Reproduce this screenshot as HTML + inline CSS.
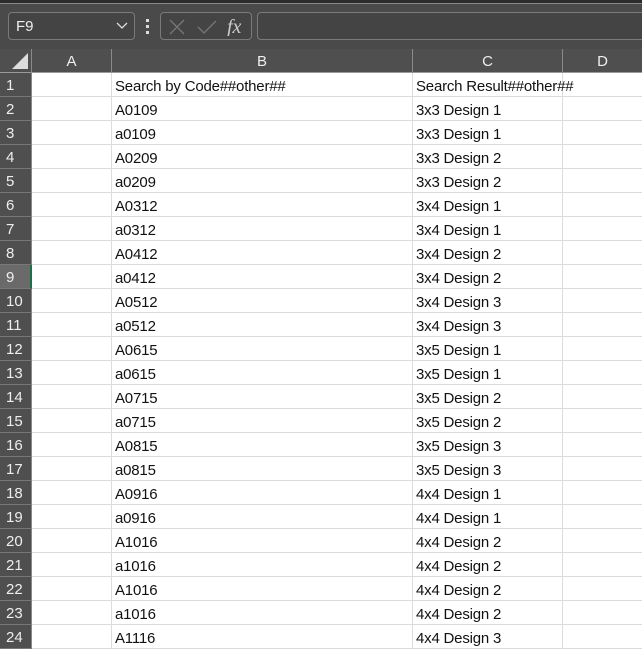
<!DOCTYPE html><html><head><style>
body{margin:0;width:642px;height:647px;overflow:hidden;background:#fff;font-family:"Liberation Sans",sans-serif;position:relative}
.top{position:absolute;left:0;top:0;width:642px;height:49px;background:#4a4a4a}
.strip{position:absolute;left:0;top:0;width:642px;height:3px;background:#2b2b2b;border-bottom:1px solid #888}
.box{position:absolute;top:12px;height:28px;border:1px solid #7a7a7a;border-radius:4px;background:#444;box-sizing:border-box}
.hdr{position:absolute;top:49px;height:24px;background:#4f4f4f;color:#eee;font-size:15px;text-align:center;line-height:26px;box-sizing:border-box;border-right:1px solid #8a8a8a;border-bottom:1px solid #9a9a9a}
.rh{position:absolute;left:0;width:32px;height:24px;background:#4f4f4f;color:#eee;font-size:15px;line-height:26px;padding-left:6px;box-sizing:border-box;border-bottom:1px solid #777;border-right:1px solid #888}
.c{position:absolute;height:24px;box-sizing:border-box;border-right:1px solid #dcdcdc;border-bottom:1px solid #dcdcdc;font-size:15px;line-height:27px;padding-left:3px;color:#111;white-space:nowrap;letter-spacing:-0.2px}
</style></head><body>
<div class="top"></div><div class="strip"></div>
<div class="box" style="left:8px;width:127px"><span style="position:absolute;left:7px;top:5px;color:#eee;font-size:15px">F9</span><svg style="position:absolute;right:6px;top:9px" width="12" height="8"><path d="M1 1L6 6L11 1" stroke="#ddd" fill="none" stroke-width="1.3"/></svg></div>
<div style="position:absolute;left:146px;top:19px;width:3px;height:3px;background:#ddd"></div><div style="position:absolute;left:146px;top:25px;width:3px;height:3px;background:#ddd"></div><div style="position:absolute;left:146px;top:31px;width:3px;height:3px;background:#ddd"></div>
<div class="box" style="left:160px;width:92px"><svg style="position:absolute;left:8px;top:5px" width="82" height="18"><path d="M1 2L15 16M15 2L1 16" stroke="#777" stroke-width="1.3"/><path d="M29 9L35 15L47 3" stroke="#777" fill="none" stroke-width="1.3"/><text x="58" y="15" fill="#ccc" font-family="Liberation Serif" font-style="italic" font-size="20">fx</text></svg></div>
<div class="box" style="left:257px;width:400px"></div>
<div class="hdr" style="left:0;width:32px;background:#4f4f4f"><svg style="position:absolute;left:12px;top:4px" width="16" height="16"><path d="M16 0L16 16L0 16Z" fill="#ddd"/></svg></div>
<div class="hdr" style="left:32px;width:80px">A</div>
<div class="hdr" style="left:112px;width:301px">B</div>
<div class="hdr" style="left:413px;width:150px">C</div>
<div class="hdr" style="left:563px;width:80px">D</div>
<div id="g"></div>
<script>
var b=["Search by Code##other##","A0109","a0109","A0209","a0209","A0312","a0312","A0412","a0412","A0512","a0512","A0615","a0615","A0715","a0715","A0815","a0815","A0916","a0916","A1016","a1016","A1016","a1016","A1116"];
var c=["Search Result##other##","3x3 Design 1","3x3 Design 1","3x3 Design 2","3x3 Design 2","3x4 Design 1","3x4 Design 1","3x4 Design 2","3x4 Design 2","3x4 Design 3","3x4 Design 3","3x5 Design 1","3x5 Design 1","3x5 Design 2","3x5 Design 2","3x5 Design 3","3x5 Design 3","4x4 Design 1","4x4 Design 1","4x4 Design 2","4x4 Design 2","4x4 Design 2","4x4 Design 2","4x4 Design 3"];
var h="";
for(var i=0;i<24;i++){var y=73+i*24;
h+='<div class="rh" style="top:'+y+'px;'+(i==8?'background:#6a6a6a;border-right:2px solid #1e7145':'')+'">'+(i+1)+'</div>';
h+='<div class="c" style="left:32px;width:80px;top:'+y+'px"></div>';
h+='<div class="c" style="left:112px;width:301px;top:'+y+'px">'+b[i]+'</div>';
h+='<div class="c" style="left:413px;width:150px;top:'+y+'px">'+c[i]+'</div>';
h+='<div class="c" style="left:563px;width:80px;top:'+y+'px"></div>';}
document.getElementById("g").innerHTML=h;
</script>
</body></html>
